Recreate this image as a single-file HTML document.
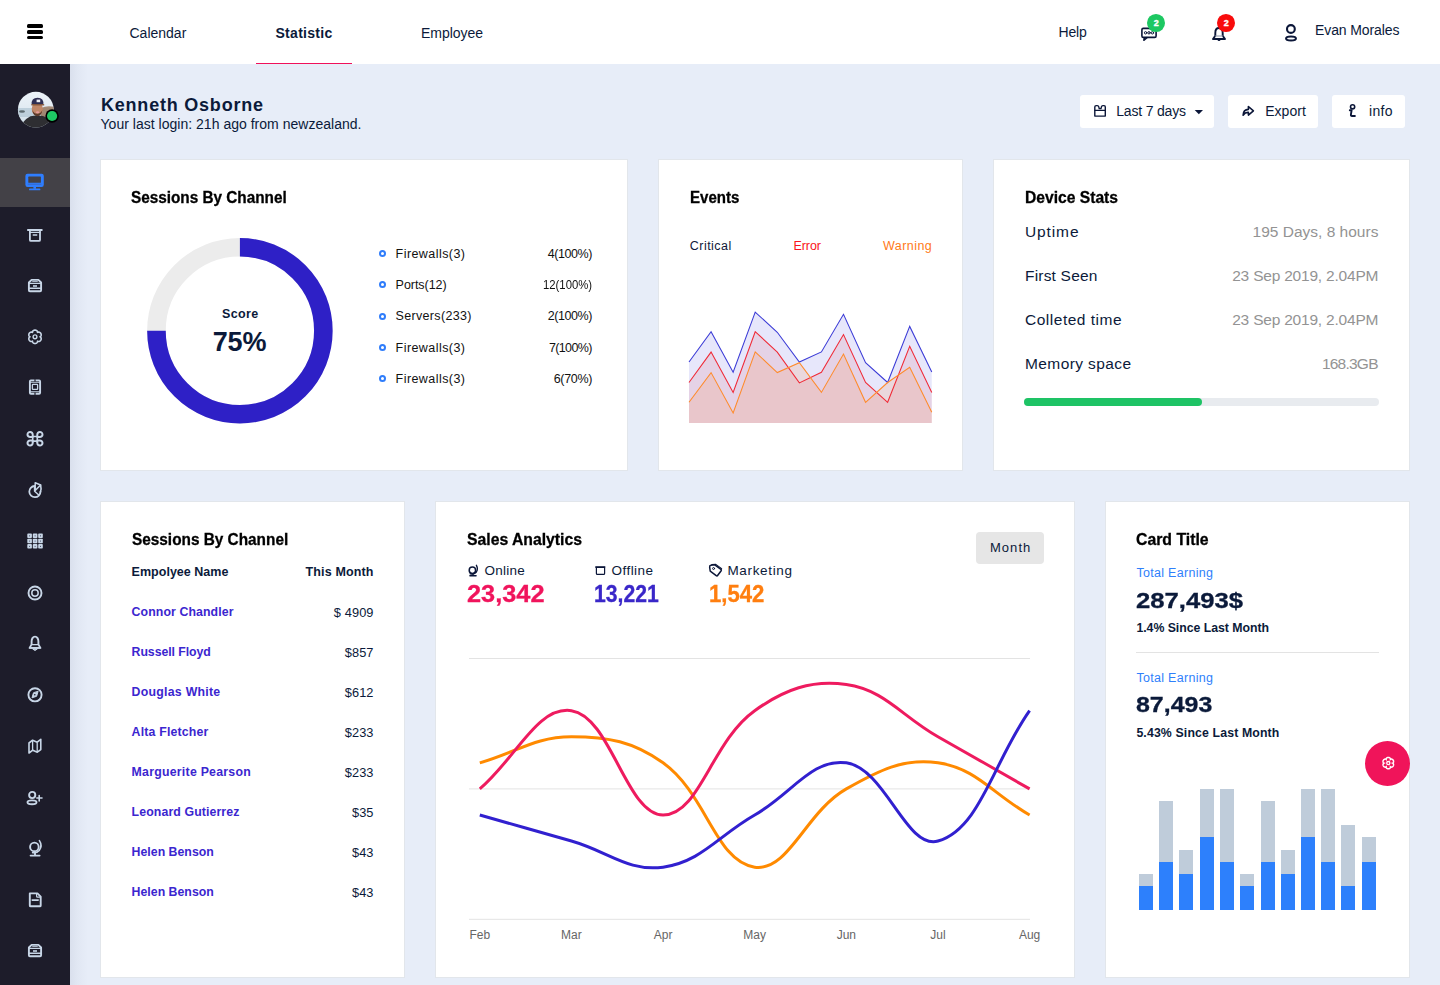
<!DOCTYPE html>
<html><head><meta charset="utf-8"><title>Dashboard</title><style>
*{margin:0;padding:0;box-sizing:border-box}
html,body{width:1440px;height:985px;overflow:hidden;background:#e7edf8;font-family:"Liberation Sans",sans-serif}
.t{position:absolute;white-space:nowrap}
#nav{position:absolute;left:0;top:0;width:1440px;height:64px;background:#fff}
#side{position:absolute;left:0;top:64px;width:70px;height:921px;background:#1d1c2a}
#shadow{position:absolute;left:70px;top:64px;width:18px;height:921px;background:linear-gradient(90deg,rgba(40,50,90,0.07),rgba(40,50,90,0.03) 40%,rgba(40,50,90,0))}
.sideact{position:absolute;left:0;top:158px;width:70px;height:49px;background:#434147}
.hb{position:absolute;left:27.2px;width:15.6px;height:3.9px;border-radius:1.5px;background:#000}
.btn{position:absolute;top:95px;height:33px;background:#fff;border-radius:3px}
.card{position:absolute;background:#fff;border:1px solid #e2e6eb}
.dot{position:absolute;width:7px;height:7px;border:2px solid #2f7dfb;border-radius:50%}
</style></head>
<body>
<div id="nav"></div>
<div id="side"></div>
<div class="sideact"></div>
<div id="shadow"></div>
<svg style="position:absolute;left:25px;top:225px" width="20" height="20" viewBox="0 0 20 20" fill="none" stroke="#c8d6e7" stroke-linecap="round" stroke-linejoin="round"><rect x="2.2" y="4" width="15.3" height="2" fill="#c8d6e7" stroke="none"/><path d="M4.9 6.2V14.9Q4.9 15.9 5.9 15.9H14Q15 15.9 15 14.9V6.2" stroke-width="1.8"/><path d="M4.9 7.3H15" stroke-width="1.2"/><path d="M8.2 10H11.8" stroke-width="1.3"/></svg><svg style="position:absolute;left:25px;top:276px" width="20" height="20" viewBox="0 0 20 20" fill="none" stroke="#c8d6e7" stroke-linecap="round" stroke-linejoin="round"><path d="M6.6 3.9H13.4L16.1 6.5V14.3Q16.1 15.3 15.1 15.3H4.9Q3.9 15.3 3.9 14.3V6.5Z" stroke-width="1.9"/><path d="M4 7.3H16" stroke-width="1.2"/><path d="M4 12.3H16" stroke-width="1.6"/><rect x="8" y="9.2" width="4" height="1.6" fill="#c8d6e7" stroke="none"/><path d="M7.6 5.5H12.4" stroke-width="0.8"/></svg><svg style="position:absolute;left:25px;top:327px" width="20" height="20" viewBox="0 0 20 20" fill="none" stroke="#c8d6e7" stroke-linecap="round" stroke-linejoin="round"><path d="M10.00 3.10 L10.23 3.11 L10.47 3.14 L10.70 3.19 L10.92 3.25 L11.14 3.34 L11.35 3.44 L11.55 3.57 L11.75 3.71 L11.93 3.87 L12.09 4.05 L12.24 4.25 L12.38 4.46 L12.48 4.71 L12.55 5.00 L12.50 5.47 L12.88 5.19 L13.17 5.11 L13.43 5.08 L13.69 5.08 L13.93 5.11 L14.17 5.17 L14.40 5.24 L14.62 5.34 L14.83 5.45 L15.02 5.58 L15.21 5.73 L15.38 5.89 L15.54 6.07 L15.68 6.25 L15.80 6.45 L15.91 6.66 L16.00 6.87 L16.07 7.10 L16.13 7.32 L16.16 7.56 L16.18 7.79 L16.17 8.03 L16.15 8.27 L16.10 8.50 L16.03 8.74 L15.93 8.97 L15.81 9.19 L15.65 9.41 L15.44 9.61 L15.00 9.80 L15.44 9.99 L15.65 10.19 L15.81 10.41 L15.93 10.63 L16.03 10.86 L16.10 11.10 L16.15 11.33 L16.17 11.57 L16.18 11.81 L16.16 12.04 L16.13 12.28 L16.07 12.50 L16.00 12.73 L15.91 12.94 L15.80 13.15 L15.68 13.35 L15.54 13.53 L15.38 13.71 L15.21 13.87 L15.02 14.02 L14.83 14.15 L14.62 14.26 L14.40 14.36 L14.17 14.43 L13.93 14.49 L13.69 14.52 L13.43 14.52 L13.17 14.49 L12.88 14.41 L12.50 14.13 L12.55 14.60 L12.48 14.89 L12.38 15.14 L12.24 15.35 L12.09 15.55 L11.93 15.73 L11.75 15.89 L11.55 16.03 L11.35 16.16 L11.14 16.26 L10.92 16.35 L10.70 16.41 L10.47 16.46 L10.23 16.49 L10.00 16.50 L9.77 16.49 L9.53 16.46 L9.30 16.41 L9.08 16.35 L8.86 16.26 L8.65 16.16 L8.45 16.03 L8.25 15.89 L8.07 15.73 L7.91 15.55 L7.76 15.35 L7.62 15.14 L7.52 14.89 L7.45 14.60 L7.50 14.13 L7.12 14.41 L6.83 14.49 L6.57 14.52 L6.31 14.52 L6.07 14.49 L5.83 14.43 L5.60 14.36 L5.38 14.26 L5.17 14.15 L4.98 14.02 L4.79 13.87 L4.62 13.71 L4.46 13.53 L4.32 13.35 L4.20 13.15 L4.09 12.94 L4.00 12.73 L3.93 12.50 L3.87 12.28 L3.84 12.04 L3.82 11.81 L3.83 11.57 L3.85 11.33 L3.90 11.10 L3.97 10.86 L4.07 10.63 L4.19 10.41 L4.35 10.19 L4.56 9.99 L5.00 9.80 L4.56 9.61 L4.35 9.41 L4.19 9.19 L4.07 8.97 L3.97 8.74 L3.90 8.50 L3.85 8.27 L3.83 8.03 L3.82 7.79 L3.84 7.56 L3.87 7.32 L3.93 7.10 L4.00 6.87 L4.09 6.66 L4.20 6.45 L4.32 6.25 L4.46 6.07 L4.62 5.89 L4.79 5.73 L4.98 5.58 L5.17 5.45 L5.38 5.34 L5.60 5.24 L5.83 5.17 L6.07 5.11 L6.31 5.08 L6.57 5.08 L6.83 5.11 L7.12 5.19 L7.50 5.47 L7.45 5.00 L7.52 4.71 L7.62 4.46 L7.76 4.25 L7.91 4.05 L8.07 3.87 L8.25 3.71 L8.45 3.57 L8.65 3.44 L8.86 3.34 L9.08 3.25 L9.30 3.19 L9.53 3.14 L9.77 3.11 L10.00 3.10Z" stroke-width="1.6"/><circle cx="10" cy="9.8" r="1.9" stroke-width="1.4"/></svg><svg style="position:absolute;left:25px;top:378px" width="20" height="20" viewBox="0 0 20 20" fill="none" stroke="#c8d6e7" stroke-linecap="round" stroke-linejoin="round"><rect x="4.9" y="2.4" width="10.2" height="13.3" rx="1" stroke-width="1.9"/><path d="M5.5 4.3H14.5M5.5 13.8H14.5" stroke-width="1.1"/><rect x="7.4" y="6.4" width="5.2" height="5" rx="0.6" stroke-width="1.3"/><path d="M10 1.6V3.2M10 14.9V16.5" stroke="#1d1c2a" stroke-width="1.2"/></svg><svg style="position:absolute;left:25px;top:429px" width="20" height="20" viewBox="0 0 20 20" fill="none" stroke="#c8d6e7" stroke-linecap="round" stroke-linejoin="round"><path d="M7.7 7.5H12.3V12.1H7.7Z" stroke-width="1.6"/><path d="M7.7 7.5V5.6A2.6 2.6 0 1 0 5.1 8.1H7.7M12.3 7.5V5.6A2.6 2.6 0 1 1 14.9 8.1H12.3M7.7 12.1V13.9A2.6 2.6 0 1 1 5.1 11.4H7.7M12.3 12.1V13.9A2.6 2.6 0 1 0 14.9 11.4H12.3" stroke-width="2"/></svg><svg style="position:absolute;left:25px;top:480px" width="20" height="20" viewBox="0 0 20 20" fill="none" stroke="#c8d6e7" stroke-linecap="round" stroke-linejoin="round"><path d="M9.6 6A5.6 5.6 0 1 0 15.5 11.6" stroke-width="1.8"/><path d="M9.6 6V11.3L13.5 14.8" stroke-width="1.5"/><path d="M10.2 2.7L15.6 5L10.2 10.5Z" stroke-width="1.5"/><path d="M15.6 5Q16.6 9 15.4 12" stroke-width="1.6"/></svg><svg style="position:absolute;left:25px;top:531px" width="20" height="20" viewBox="0 0 20 20" fill="none" stroke="#c8d6e7" stroke-linecap="round" stroke-linejoin="round"><rect x="2.3" y="2.6" width="4.6" height="4.5" rx="0.8" fill="#c8d6e7" stroke="none"/><circle cx="4.6" cy="4.85" r="0.55" fill="#3a3f5a" stroke="none"/><rect x="2.3" y="7.8" width="4.6" height="4.5" rx="0.8" fill="#c8d6e7" stroke="none"/><circle cx="4.6" cy="10.05" r="0.55" fill="#3a3f5a" stroke="none"/><rect x="2.3" y="13.1" width="4.6" height="4.5" rx="0.8" fill="#c8d6e7" stroke="none"/><circle cx="4.6" cy="15.35" r="0.55" fill="#3a3f5a" stroke="none"/><rect x="7.8" y="2.6" width="4.6" height="4.5" rx="0.8" fill="#c8d6e7" stroke="none"/><circle cx="10.1" cy="4.85" r="0.55" fill="#3a3f5a" stroke="none"/><rect x="7.8" y="7.8" width="4.6" height="4.5" rx="0.8" fill="#c8d6e7" stroke="none"/><circle cx="10.1" cy="10.05" r="0.55" fill="#3a3f5a" stroke="none"/><rect x="7.8" y="13.1" width="4.6" height="4.5" rx="0.8" fill="#c8d6e7" stroke="none"/><circle cx="10.1" cy="15.35" r="0.55" fill="#3a3f5a" stroke="none"/><rect x="13.2" y="2.6" width="4.6" height="4.5" rx="0.8" fill="#c8d6e7" stroke="none"/><circle cx="15.5" cy="4.85" r="0.55" fill="#3a3f5a" stroke="none"/><rect x="13.2" y="7.8" width="4.6" height="4.5" rx="0.8" fill="#c8d6e7" stroke="none"/><circle cx="15.5" cy="10.05" r="0.55" fill="#3a3f5a" stroke="none"/><rect x="13.2" y="13.1" width="4.6" height="4.5" rx="0.8" fill="#c8d6e7" stroke="none"/><circle cx="15.5" cy="15.35" r="0.55" fill="#3a3f5a" stroke="none"/></svg><svg style="position:absolute;left:25px;top:582px" width="20" height="20" viewBox="0 0 20 20" fill="none" stroke="#c8d6e7" stroke-linecap="round" stroke-linejoin="round"><circle cx="10" cy="11" r="6.5" stroke-width="1.9"/><circle cx="10" cy="11" r="3.2" stroke-width="1.5"/></svg><svg style="position:absolute;left:25px;top:633px" width="20" height="20" viewBox="0 0 20 20" fill="none" stroke="#c8d6e7" stroke-linecap="round" stroke-linejoin="round"><path d="M10 3.6C7.8 3.6 6.6 6 6.6 8.6V11.4L4.6 14.9H15.4L13.4 11.4V8.6C13.4 6 12.2 3.6 10 3.6Z" stroke-width="1.9"/><path d="M6.8 11.6H13.2" stroke-width="1.2"/><path d="M5 14.9H15" stroke-width="1.6"/><path d="M7.9 16.2Q10 18.8 12.1 16.2Z" fill="#c8d6e7" stroke-width="1"/></svg><svg style="position:absolute;left:25px;top:685px" width="20" height="20" viewBox="0 0 20 20" fill="none" stroke="#c8d6e7" stroke-linecap="round" stroke-linejoin="round"><circle cx="10" cy="9.8" r="6.6" stroke-width="1.9"/><path d="M13 6.6L11.6 11.3L7 12.8L8.4 8.1Z" fill="#c8d6e7" stroke-width="1"/><circle cx="9.8" cy="9.7" r="0.8" fill="#1d1c2a" stroke="none"/></svg><svg style="position:absolute;left:25px;top:736px" width="20" height="20" viewBox="0 0 20 20" fill="none" stroke="#c8d6e7" stroke-linecap="round" stroke-linejoin="round"><path d="M4 7L7.6 4.2L12.2 6.2L15.8 3.3V13.6L12.3 16.2L7.8 14.2L4 17Z" stroke-width="1.6"/><path d="M7.6 5V14M12.2 7V15.5" stroke-width="1.3"/></svg><svg style="position:absolute;left:25px;top:787px" width="20" height="20" viewBox="0 0 20 20" fill="none" stroke="#c8d6e7" stroke-linecap="round" stroke-linejoin="round"><circle cx="7.2" cy="8" r="3.1" stroke-width="1.9"/><ellipse cx="7" cy="15.3" rx="4.5" ry="1.9" stroke-width="1.9"/><path d="M11.8 11H17M14.2 8.5V14" stroke-width="1.6"/></svg><svg style="position:absolute;left:25px;top:838px" width="20" height="20" viewBox="0 0 20 20" fill="none" stroke="#c8d6e7" stroke-linecap="round" stroke-linejoin="round"><circle cx="9.4" cy="8.9" r="4.3" stroke-width="1.9"/><path d="M14.4 2.6Q17.8 7.6 14.2 12.4Q11.8 15.2 7.6 14.6" stroke-width="1.6"/><path d="M10 14.8V17M5.6 17.6H14.6" stroke-width="1.9"/></svg><svg style="position:absolute;left:25px;top:890px" width="20" height="20" viewBox="0 0 20 20" fill="none" stroke="#c8d6e7" stroke-linecap="round" stroke-linejoin="round"><path d="M4.8 3.4H12.4L15.7 6.7V15.4Q15.7 16.3 14.8 16.3H5.7Q4.8 16.3 4.8 15.4Z" stroke-width="1.9"/><path d="M11.6 3.8V6.2Q11.6 7.1 12.5 7.1H15.3" stroke-width="1.2"/><path d="M7.2 10.1H13.2" stroke-width="1.6"/></svg><svg style="position:absolute;left:25px;top:941px" width="20" height="20" viewBox="0 0 20 20" fill="none" stroke="#c8d6e7" stroke-linecap="round" stroke-linejoin="round"><path d="M6.6 3.9H13.4L16.1 6.5V14.3Q16.1 15.3 15.1 15.3H4.9Q3.9 15.3 3.9 14.3V6.5Z" stroke-width="1.9"/><path d="M4 7.3H16" stroke-width="1.2"/><path d="M4 12.3H16" stroke-width="1.6"/><rect x="8" y="9.2" width="4" height="1.6" fill="#c8d6e7" stroke="none"/><path d="M7.6 5.5H12.4" stroke-width="0.8"/></svg><svg style="position:absolute;left:20px;top:165px" width="30" height="30" viewBox="20 165 30 30"><rect x="25.4" y="173.8" width="18.4" height="13.2" rx="2.2" fill="#2f7eff"/><rect x="28.3" y="176.6" width="12.6" height="6.2" rx="0.6" fill="#434147"/><rect x="27.8" y="183.8" width="13.6" height="0.7" fill="#3a5fae"/><rect x="33.4" y="186.8" width="2.6" height="2" fill="#2f7eff"/><rect x="29" y="188.4" width="11.4" height="1.9" rx="0.9" fill="#2f7eff"/></svg>
<svg style="position:absolute;left:1130px;top:8px" width="180" height="40" viewBox="1130 8 180 40" fill="none" stroke="#0b1638" stroke-linejoin="round" stroke-linecap="round"><rect x="1141.9" y="28.4" width="14.2" height="9" rx="1.4" stroke-width="1.6"/><path d="M1144.2 37.6L1143.8 40.4L1147 37.6" stroke-width="1.4"/><circle cx="1145.6" cy="32.8" r="1.2" stroke-width="1"/><circle cx="1149" cy="32.8" r="1.2" stroke-width="1"/><circle cx="1152.4" cy="32.8" r="1.2" stroke-width="1"/><path d="M1219 28C1216.3 28 1215.3 30.5 1215.3 33V35.8L1213 39H1225L1222.7 35.8V33C1222.7 30.5 1221.7 28 1219 28Z" stroke-width="1.9"/><path d="M1215.5 36H1222.5" stroke-width="1" stroke="#8a93a8"/><path d="M1217.2 39.6Q1219 42 1220.8 39.6Z" fill="#0b1638" stroke-width="1"/><circle cx="1290.9" cy="29" r="3.9" stroke-width="2.1"/><ellipse cx="1291" cy="38.5" rx="4.9" ry="2" stroke-width="2.1"/></svg><div style="position:absolute;left:1147.1px;top:14px;width:17.8px;height:17.8px;border-radius:50%;background:#1dc862"></div><div style="position:absolute;left:1217.1px;top:14px;width:17.8px;height:17.8px;border-radius:50%;background:#f80c0c"></div>
<svg style="position:absolute;left:16px;top:90px" width="46" height="40" viewBox="16 90 46 40"><defs><clipPath id="av"><circle cx="35.8" cy="109.7" r="17.9"/></clipPath><linearGradient id="sky" x1="0" y1="0" x2="0" y2="1"><stop offset="0" stop-color="#eef4f9"/><stop offset="0.55" stop-color="#dfe9f1"/><stop offset="1" stop-color="#c9d8e2"/></linearGradient><filter id="bl" x="-20%" y="-20%" width="140%" height="140%"><feGaussianBlur stdDeviation="0.5"/></filter></defs><g clip-path="url(#av)"><rect x="16" y="90" width="40" height="40" fill="url(#sky)"/><g filter="url(#bl)"><rect x="16" y="108" width="40" height="9" fill="#b5c9d6" opacity="0.8"/><ellipse cx="22" cy="111.5" rx="3" ry="1.2" fill="#5d6a70"/><path d="M41 108Q47 105 55 107V122H41Z" fill="#9b7a62" opacity="0.85"/><path d="M20 131Q21 121 30.5 116.2Q37 114.8 43 116Q50 118 55 127V131Z" fill="#2d2d32"/><ellipse cx="37.3" cy="109" rx="5.6" ry="6.8" fill="#c08767"/><path d="M32.4 110Q33 116 37.3 116.2Q41.6 116 42.3 110Q41 113.6 37.3 113.8Q33.6 113.6 32.4 110Z" fill="#5a3a2c"/><path d="M31.6 104.8Q31 98 37.6 97.8Q44 98 43.4 104.8Z" fill="#2f2e52"/><rect x="36.6" y="99.6" width="3.6" height="2.6" fill="#eceef4"/><path d="M31.4 104.8H44.2" stroke="#8a5a3c" stroke-width="1.4"/><ellipse cx="37.6" cy="112.2" rx="1.7" ry="1" fill="#e59a9a"/></g></g><circle cx="52.1" cy="116" r="6.7" fill="#000"/><circle cx="52.1" cy="116" r="5.1" fill="#1ec864"/></svg>
<div class="hb" style="top:24px"></div><div class="hb" style="top:29.7px"></div><div class="hb" style="top:35.5px"></div>
<div class="t" style="top:26px;font-size:14px;line-height:14px;color:#0b1a3a;left:129.50px;">Calendar</div>
<div class="t" style="top:26px;font-size:14px;line-height:14px;font-weight:bold;color:#0b1a3a;letter-spacing:0.286px;left:275.50px;">Statistic</div>
<div class="t" style="top:26px;font-size:14px;line-height:14px;color:#0b1a3a;letter-spacing:-0.037px;left:421.00px;">Employee</div>
<div style="position:absolute;left:256px;top:63px;width:96px;height:1px;background:#f0105a"></div>
<div class="t" style="top:25px;font-size:14px;line-height:14px;color:#0b1a3a;letter-spacing:-0.198px;left:1058.50px;">Help</div>
<div class="t" style="top:23px;font-size:14px;line-height:14px;color:#0b1a3a;letter-spacing:-0.100px;left:1315.00px;">Evan Morales</div>
<div class="t" style="top:96px;font-size:18px;line-height:18px;font-weight:bold;color:#0b1a3a;letter-spacing:0.784px;left:101.00px;">Kenneth Osborne</div>
<div class="t" style="top:117px;font-size:14px;line-height:14px;color:#0b1a3a;letter-spacing:0.020px;left:100.50px;">Your last login: 21h ago from newzealand.</div>
<div class="btn" style="left:1080px;width:134px"></div>
<div class="btn" style="left:1228px;width:90px"></div>
<div class="btn" style="left:1332px;width:73px"></div>
<div class="t" style="top:104px;font-size:14px;line-height:14px;color:#0b1a3a;letter-spacing:-0.180px;left:1116.20px;">Last 7 days</div>
<div class="t" style="top:104px;font-size:14px;line-height:14px;color:#0b1a3a;letter-spacing:0.027px;left:1265.20px;">Export</div>
<div class="t" style="top:104px;font-size:14px;line-height:14px;color:#0b1a3a;letter-spacing:0.342px;left:1369.00px;">info</div>
<div class="card" style="left:100px;top:159px;width:528px;height:312px"></div>
<div class="card" style="left:658px;top:159px;width:305px;height:312px"></div>
<div class="card" style="left:993px;top:159px;width:417px;height:312px"></div>
<div class="card" style="left:100px;top:501px;width:305px;height:477px"></div>
<div class="card" style="left:435px;top:501px;width:640px;height:477px"></div>
<div class="card" style="left:1105px;top:501px;width:305px;height:477px"></div>
<div class="t" style="top:190px;left:131.40px;font-size:16px;line-height:16px;color:#000;transform:scaleX(0.9568);transform-origin:0 0;font-weight:bold;-webkit-text-stroke:0.3px #000;">Sessions By Channel</div>
<svg style="position:absolute;left:140px;top:231px" width="200" height="200" viewBox="140 231 200 200"><circle cx="239.9" cy="330.75" r="83.45" fill="none" stroke="#ececec" stroke-width="18.6"/><path d="M239.9 247.3 A83.45 83.45 0 1 1 156.45 330.75" fill="none" stroke="#2e20c6" stroke-width="18.6"/></svg>
<div class="t" style="top:308px;font-size:12.5px;line-height:12.5px;font-weight:bold;color:#0b1a3a;letter-spacing:0.414px;left:221.90px;">Score</div>
<div class="t" style="top:329px;font-size:27px;line-height:27px;font-weight:bold;color:#0b1a3a;letter-spacing:-0.220px;left:212.80px;">75%</div>
<div class="dot" style="left:378.9px;top:250.10px"></div>
<div class="t" style="top:248px;font-size:12.5px;line-height:12.5px;color:#111;letter-spacing:0.437px;left:395.60px;">Firewalls(3)</div>
<div class="t" style="top:248px;font-size:12.5px;line-height:12.5px;color:#111;letter-spacing:-0.442px;left:547.80px;width:46.16px;text-align:left;">4(100%)</div>
<div class="dot" style="left:378.9px;top:281.30px"></div>
<div class="t" style="top:279px;font-size:12.5px;line-height:12.5px;color:#111;letter-spacing:-0.038px;left:395.60px;">Ports(12)</div>
<div class="t" style="top:279px;left:543.30px;font-size:12.5px;line-height:12.5px;color:#111;transform:scaleX(0.9059);transform-origin:0 0;">12(100%)</div>
<div class="dot" style="left:378.9px;top:312.50px"></div>
<div class="t" style="top:310px;font-size:12.5px;line-height:12.5px;color:#111;letter-spacing:0.323px;left:395.60px;">Servers(233)</div>
<div class="t" style="top:310px;font-size:12.5px;line-height:12.5px;color:#111;letter-spacing:-0.442px;left:547.80px;width:46.16px;text-align:left;">2(100%)</div>
<div class="dot" style="left:378.9px;top:343.70px"></div>
<div class="t" style="top:342px;font-size:12.5px;line-height:12.5px;color:#111;letter-spacing:0.437px;left:395.60px;">Firewalls(3)</div>
<div class="t" style="top:342px;font-size:12.5px;line-height:12.5px;color:#111;letter-spacing:-0.625px;left:548.90px;width:44.88px;text-align:left;">7(100%)</div>
<div class="dot" style="left:378.9px;top:374.90px"></div>
<div class="t" style="top:373px;font-size:12.5px;line-height:12.5px;color:#111;letter-spacing:0.437px;left:395.60px;">Firewalls(3)</div>
<div class="t" style="top:373px;font-size:12.5px;line-height:12.5px;color:#111;letter-spacing:-0.319px;left:553.70px;width:40.38px;text-align:left;">6(70%)</div>
<div class="t" style="top:190px;left:690.30px;font-size:16px;line-height:16px;color:#000;transform:scaleX(0.9396);transform-origin:0 0;font-weight:bold;-webkit-text-stroke:0.3px #000;">Events</div>
<div class="t" style="top:240px;font-size:12.5px;line-height:12.5px;color:#10193a;letter-spacing:0.458px;left:689.80px;">Critical</div>
<div class="t" style="top:240px;font-size:12.5px;line-height:12.5px;color:#fa1420;letter-spacing:-0.045px;left:793.40px;">Error</div>
<div class="t" style="top:240px;font-size:12.5px;line-height:12.5px;color:#ff7a19;letter-spacing:0.453px;left:883.00px;">Warning</div>
<svg style="position:absolute;left:680px;top:300px" width="260" height="130" viewBox="680 300 260 130"><polygon points="689.00,422.9 689.00,362.00 711.07,331.70 733.14,372.30 755.21,312.10 777.28,332.30 799.35,362.00 821.42,351.90 843.49,314.30 865.56,362.70 887.63,382.50 909.70,326.40 931.77,371.90 931.77,422.9" fill="rgba(60,60,220,0.12)"/><polygon points="689.00,422.9 689.00,382.50 711.07,352.10 733.14,392.40 755.21,331.70 777.28,352.10 799.35,382.90 821.42,372.30 843.49,334.60 865.56,382.50 887.63,402.30 909.70,346.20 931.77,392.40 931.77,422.9" fill="rgba(220,30,50,0.10)"/><polygon points="689.00,422.9 689.00,402.30 711.07,372.60 733.14,412.90 755.21,351.90 777.28,372.60 799.35,362.70 821.42,392.40 843.49,354.10 865.56,402.30 887.63,382.50 909.70,367.30 931.77,412.20 931.77,422.9" fill="rgba(255,137,51,0.15)"/><polyline points="689.00,362.00 711.07,331.70 733.14,372.30 755.21,312.10 777.28,332.30 799.35,362.00 821.42,351.90 843.49,314.30 865.56,362.70 887.63,382.50 909.70,326.40 931.77,371.90" fill="none" stroke="#3b3bd6" stroke-width="1.05"/><polyline points="689.00,382.50 711.07,352.10 733.14,392.40 755.21,331.70 777.28,352.10 799.35,382.90 821.42,372.30 843.49,334.60 865.56,382.50 887.63,402.30 909.70,346.20 931.77,392.40" fill="none" stroke="#f02a36" stroke-width="1.05"/><polyline points="689.00,402.30 711.07,372.60 733.14,412.90 755.21,351.90 777.28,372.60 799.35,362.70 821.42,392.40 843.49,354.10 865.56,402.30 887.63,382.50 909.70,367.30 931.77,412.20" fill="none" stroke="#ff8a2a" stroke-width="1.05"/></svg>
<div class="t" style="top:190px;left:1025.40px;font-size:16px;line-height:16px;color:#000;transform:scaleX(0.9772);transform-origin:0 0;font-weight:bold;-webkit-text-stroke:0.3px #000;">Device Stats</div>
<div class="t" style="top:224px;font-size:15.5px;line-height:15.5px;color:#0b1a3a;letter-spacing:0.881px;left:1025.00px;">Uptime</div>
<div class="t" style="top:224px;font-size:15.5px;line-height:15.5px;color:#939393;left:1252.60px;width:127.91px;text-align:left;">195 Days, 8 hours</div>
<div class="t" style="top:268px;font-size:15.5px;line-height:15.5px;color:#0b1a3a;letter-spacing:0.196px;left:1025.00px;">First Seen</div>
<div class="t" style="top:268px;font-size:15.5px;line-height:15.5px;color:#939393;letter-spacing:-0.203px;left:1232.20px;width:148.10px;text-align:left;">23 Sep 2019, 2.04PM</div>
<div class="t" style="top:312px;font-size:15.5px;line-height:15.5px;color:#0b1a3a;letter-spacing:0.512px;left:1025.00px;">Colleted time</div>
<div class="t" style="top:312px;font-size:15.5px;line-height:15.5px;color:#939393;letter-spacing:-0.203px;left:1232.20px;width:148.10px;text-align:left;">23 Sep 2019, 2.04PM</div>
<div class="t" style="top:356px;font-size:15.5px;line-height:15.5px;color:#0b1a3a;letter-spacing:0.396px;left:1025.00px;">Memory space</div>
<div class="t" style="top:356px;font-size:15.5px;line-height:15.5px;color:#939393;letter-spacing:-0.764px;left:1321.90px;width:57.84px;text-align:left;">168.3GB</div>
<div style="position:absolute;left:1024px;top:398px;width:355px;height:8px;border-radius:4px;background:#e8ebef"></div>
<div style="position:absolute;left:1024px;top:398px;width:178px;height:8px;border-radius:4px;background:#1ec365"></div>
<div class="t" style="top:532px;left:131.60px;font-size:16px;line-height:16px;color:#000;transform:scaleX(0.9599);transform-origin:0 0;font-weight:bold;-webkit-text-stroke:0.3px #000;">Sessions By Channel</div>
<div class="t" style="top:566px;font-size:12.5px;line-height:12.5px;font-weight:bold;color:#0b1a3a;letter-spacing:0.019px;left:131.60px;">Empolyee Name</div>
<div class="t" style="top:566px;font-size:12.5px;line-height:12.5px;font-weight:bold;color:#0b1a3a;letter-spacing:0.150px;left:305.50px;width:70.15px;text-align:left;">This Month</div>
<div class="t" style="top:606px;font-size:12.3px;line-height:12.3px;font-weight:bold;color:#3b26cf;letter-spacing:0.104px;left:131.60px;">Connor Chandler</div>
<div class="t" style="top:607px;font-size:12.8px;line-height:12.8px;color:#0b1a3a;letter-spacing:0.100px;left:333.85px;width:41.75px;text-align:left;">$ 4909</div>
<div class="t" style="top:646px;font-size:12.3px;line-height:12.3px;font-weight:bold;color:#3b26cf;letter-spacing:-0.064px;left:131.60px;">Russell Floyd</div>
<div class="t" style="top:647px;font-size:12.8px;line-height:12.8px;color:#0b1a3a;letter-spacing:0.100px;left:344.72px;width:30.88px;text-align:left;">$857</div>
<div class="t" style="top:686px;font-size:12.3px;line-height:12.3px;font-weight:bold;color:#3b26cf;letter-spacing:0.265px;left:131.60px;">Douglas White</div>
<div class="t" style="top:687px;font-size:12.8px;line-height:12.8px;color:#0b1a3a;letter-spacing:0.100px;left:344.72px;width:30.88px;text-align:left;">$612</div>
<div class="t" style="top:726px;font-size:12.3px;line-height:12.3px;font-weight:bold;color:#3b26cf;letter-spacing:0.191px;left:131.60px;">Alta Fletcher</div>
<div class="t" style="top:727px;font-size:12.8px;line-height:12.8px;color:#0b1a3a;letter-spacing:0.100px;left:344.72px;width:30.88px;text-align:left;">$233</div>
<div class="t" style="top:766px;font-size:12.3px;line-height:12.3px;font-weight:bold;color:#3b26cf;letter-spacing:0.251px;left:131.60px;">Marguerite Pearson</div>
<div class="t" style="top:767px;font-size:12.8px;line-height:12.8px;color:#0b1a3a;letter-spacing:0.100px;left:344.72px;width:30.88px;text-align:left;">$233</div>
<div class="t" style="top:806px;font-size:12.3px;line-height:12.3px;font-weight:bold;color:#3b26cf;letter-spacing:0.116px;left:131.60px;">Leonard Gutierrez</div>
<div class="t" style="top:807px;font-size:12.8px;line-height:12.8px;color:#0b1a3a;letter-spacing:0.100px;left:351.94px;width:23.66px;text-align:left;">$35</div>
<div class="t" style="top:846px;font-size:12.3px;line-height:12.3px;font-weight:bold;color:#3b26cf;letter-spacing:0.017px;left:131.60px;">Helen Benson</div>
<div class="t" style="top:847px;font-size:12.8px;line-height:12.8px;color:#0b1a3a;letter-spacing:0.100px;left:351.94px;width:23.66px;text-align:left;">$43</div>
<div class="t" style="top:886px;font-size:12.3px;line-height:12.3px;font-weight:bold;color:#3b26cf;letter-spacing:0.017px;left:131.60px;">Helen Benson</div>
<div class="t" style="top:887px;font-size:12.8px;line-height:12.8px;color:#0b1a3a;letter-spacing:0.100px;left:351.94px;width:23.66px;text-align:left;">$43</div>
<div class="t" style="top:532px;left:466.80px;font-size:16px;line-height:16px;color:#000;transform:scaleX(0.9845);transform-origin:0 0;font-weight:bold;-webkit-text-stroke:0.3px #000;">Sales Analytics</div>
<div style="position:absolute;left:976px;top:532px;width:68px;height:32px;border-radius:4px;background:#e6e6e6"></div>
<div class="t" style="top:541px;font-size:13px;line-height:13px;color:#0b1a3a;letter-spacing:1.067px;left:989.90px;">Month</div>
<div class="t" style="top:564px;font-size:13.5px;line-height:13.5px;color:#0b1a3a;letter-spacing:0.235px;left:484.60px;">Online</div>
<div class="t" style="top:564px;font-size:13.5px;line-height:13.5px;color:#0b1a3a;letter-spacing:0.438px;left:611.60px;">Offline</div>
<div class="t" style="top:564px;font-size:13.5px;line-height:13.5px;color:#0b1a3a;letter-spacing:0.666px;left:727.40px;">Marketing</div>
<div class="t" style="top:583px;left:466.80px;font-size:23px;line-height:23px;color:#f0145c;transform:scaleX(1.1016);transform-origin:0 0;font-weight:bold;-webkit-text-stroke:0.3px #f0145c;">23,342</div>
<div class="t" style="top:583px;left:594.30px;font-size:23px;line-height:23px;color:#3a27c9;transform:scaleX(0.9211);transform-origin:0 0;font-weight:bold;-webkit-text-stroke:0.3px #3a27c9;">13,221</div>
<div class="t" style="top:583px;left:709.00px;font-size:23px;line-height:23px;color:#ff7e0f;transform:scaleX(0.9625);transform-origin:0 0;font-weight:bold;-webkit-text-stroke:0.3px #ff7e0f;">1,542</div>
<svg style="position:absolute;left:460px;top:640px" width="600" height="300" viewBox="460 640 600 300"><line x1="469" x2="1030" y1="658.5" y2="658.5" stroke="#e3e3e3" stroke-width="1"/><line x1="469" x2="1030" y1="788.9" y2="788.9" stroke="#e3e3e3" stroke-width="1"/><line x1="469" x2="1030" y1="919.3" y2="919.3" stroke="#e3e3e3" stroke-width="1"/><path d="M479.80 762.82 C516.45 752.39 534.78 736.74 571.43 736.74 C608.09 736.74 633.24 741.59 663.07 762.82 C706.54 793.75 715.45 861.55 754.70 867.14 C788.76 871.99 805.40 812.20 846.33 788.90 C878.70 770.47 903.17 757.87 937.97 762.82 C976.48 768.30 992.95 794.12 1029.60 814.98" fill="none" stroke="#ff8a00" stroke-width="3"/><path d="M479.80 788.90 C516.45 757.60 537.37 705.81 571.43 710.66 C610.68 716.25 626.41 814.98 663.07 814.98 C699.72 814.98 711.22 741.59 754.70 710.66 C784.53 689.43 811.54 679.63 846.33 684.58 C884.84 690.06 901.31 715.88 937.97 736.74 C974.62 757.60 992.95 768.04 1029.60 788.90" fill="none" stroke="#ee1b5f" stroke-width="3"/><path d="M479.80 814.98 C516.45 825.41 534.78 830.63 571.43 841.06 C608.09 851.49 628.27 872.09 663.07 867.14 C701.58 861.66 718.05 835.84 754.70 814.98 C791.35 794.12 812.12 757.95 846.33 762.82 C885.43 768.38 906.41 850.04 937.97 841.06 C979.71 829.18 992.95 762.82 1029.60 710.66" fill="none" stroke="#3120cf" stroke-width="3"/></svg>
<div class="t" style="top:929px;font-size:12px;line-height:12px;color:#666;left:469.46px;">Feb</div>
<div class="t" style="top:929px;font-size:12px;line-height:12px;color:#666;left:561.10px;">Mar</div>
<div class="t" style="top:929px;font-size:12px;line-height:12px;color:#666;left:653.73px;">Apr</div>
<div class="t" style="top:929px;font-size:12px;line-height:12px;color:#666;left:743.36px;">May</div>
<div class="t" style="top:929px;font-size:12px;line-height:12px;color:#666;left:836.66px;">Jun</div>
<div class="t" style="top:929px;font-size:12px;line-height:12px;color:#666;left:930.30px;">Jul</div>
<div class="t" style="top:929px;font-size:12px;line-height:12px;color:#666;left:1018.92px;">Aug</div>
<div class="t" style="top:532px;left:1136.40px;font-size:16px;line-height:16px;color:#000;transform:scaleX(0.9877);transform-origin:0 0;font-weight:bold;-webkit-text-stroke:0.3px #000;">Card Title</div>
<div class="t" style="top:567px;font-size:12.5px;line-height:12.5px;color:#2f7ffb;letter-spacing:0.303px;left:1136.40px;">Total Earning</div>
<div class="t" style="top:590px;left:1136.40px;font-size:22px;line-height:22px;color:#0b1a3a;transform:scaleX(1.1661);transform-origin:0 0;font-weight:bold;-webkit-text-stroke:0.3px #0b1a3a;">287,493$</div>
<div class="t" style="top:622px;font-size:12.3px;line-height:12.3px;font-weight:bold;color:#0b1a3a;letter-spacing:-0.034px;left:1136.40px;">1.4% Since Last Month</div>
<div style="position:absolute;left:1136px;top:652px;width:243px;height:1px;background:#e3e3e3"></div>
<div class="t" style="top:672px;font-size:12.5px;line-height:12.5px;color:#2f7ffb;letter-spacing:0.303px;left:1136.40px;">Total Earning</div>
<div class="t" style="top:694px;left:1136.40px;font-size:22px;line-height:22px;color:#0b1a3a;transform:scaleX(1.1339);transform-origin:0 0;font-weight:bold;-webkit-text-stroke:0.3px #0b1a3a;">87,493</div>
<div class="t" style="top:727px;font-size:12.3px;line-height:12.3px;font-weight:bold;color:#0b1a3a;letter-spacing:0.137px;left:1136.40px;">5.43% Since Last Month</div>
<div style="position:absolute;left:1139.0px;top:873.7px;width:14px;height:36.3px;background:#bfccda"></div><div style="position:absolute;left:1139.0px;top:885.8px;width:14px;height:24.2px;background:#2d80fc"></div><div style="position:absolute;left:1159.0px;top:801.1px;width:14px;height:108.9px;background:#bfccda"></div><div style="position:absolute;left:1159.0px;top:861.6px;width:14px;height:48.4px;background:#2d80fc"></div><div style="position:absolute;left:1179.0px;top:849.5px;width:14px;height:60.5px;background:#bfccda"></div><div style="position:absolute;left:1179.0px;top:873.7px;width:14px;height:36.3px;background:#2d80fc"></div><div style="position:absolute;left:1200.0px;top:789.0px;width:14px;height:121.0px;background:#bfccda"></div><div style="position:absolute;left:1200.0px;top:837.4px;width:14px;height:72.6px;background:#2d80fc"></div><div style="position:absolute;left:1220.0px;top:789.0px;width:14px;height:121.0px;background:#bfccda"></div><div style="position:absolute;left:1220.0px;top:861.6px;width:14px;height:48.4px;background:#2d80fc"></div><div style="position:absolute;left:1240.0px;top:873.7px;width:14px;height:36.3px;background:#bfccda"></div><div style="position:absolute;left:1240.0px;top:885.8px;width:14px;height:24.2px;background:#2d80fc"></div><div style="position:absolute;left:1260.5px;top:801.1px;width:14px;height:108.9px;background:#bfccda"></div><div style="position:absolute;left:1260.5px;top:861.6px;width:14px;height:48.4px;background:#2d80fc"></div><div style="position:absolute;left:1281.0px;top:849.5px;width:14px;height:60.5px;background:#bfccda"></div><div style="position:absolute;left:1281.0px;top:873.7px;width:14px;height:36.3px;background:#2d80fc"></div><div style="position:absolute;left:1301.0px;top:789.0px;width:14px;height:121.0px;background:#bfccda"></div><div style="position:absolute;left:1301.0px;top:837.4px;width:14px;height:72.6px;background:#2d80fc"></div><div style="position:absolute;left:1321.0px;top:789.0px;width:14px;height:121.0px;background:#bfccda"></div><div style="position:absolute;left:1321.0px;top:861.6px;width:14px;height:48.4px;background:#2d80fc"></div><div style="position:absolute;left:1341.3px;top:825.3px;width:14px;height:84.7px;background:#bfccda"></div><div style="position:absolute;left:1341.3px;top:885.8px;width:14px;height:24.2px;background:#2d80fc"></div><div style="position:absolute;left:1362.0px;top:837.4px;width:14px;height:72.6px;background:#bfccda"></div><div style="position:absolute;left:1362.0px;top:861.6px;width:14px;height:48.4px;background:#2d80fc"></div>
<div style="position:absolute;left:1365px;top:741px;width:45px;height:45px;border-radius:50%;background:#f0145a"></div>
<svg style="position:absolute;left:1378px;top:754px" width="20" height="20" viewBox="1378 754 20 20" fill="none" stroke="#fff"><path d="M1388.30 757.40 L1388.50 757.41 L1388.70 757.43 L1388.89 757.47 L1389.08 757.53 L1389.27 757.60 L1389.45 757.69 L1389.62 757.79 L1389.79 757.91 L1389.94 758.04 L1390.09 758.19 L1390.22 758.36 L1390.33 758.54 L1390.42 758.74 L1390.49 758.98 L1390.45 759.38 L1390.77 759.15 L1391.01 759.08 L1391.23 759.06 L1391.45 759.07 L1391.66 759.10 L1391.86 759.15 L1392.05 759.22 L1392.24 759.30 L1392.41 759.40 L1392.58 759.51 L1392.73 759.64 L1392.88 759.77 L1393.01 759.92 L1393.13 760.08 L1393.24 760.25 L1393.33 760.43 L1393.41 760.61 L1393.47 760.80 L1393.52 760.99 L1393.55 761.19 L1393.56 761.39 L1393.56 761.59 L1393.54 761.79 L1393.50 761.99 L1393.44 762.19 L1393.37 762.39 L1393.26 762.58 L1393.13 762.76 L1392.96 762.94 L1392.60 763.10 L1392.96 763.26 L1393.13 763.44 L1393.26 763.62 L1393.37 763.81 L1393.44 764.01 L1393.50 764.21 L1393.54 764.41 L1393.56 764.61 L1393.56 764.81 L1393.55 765.01 L1393.52 765.21 L1393.47 765.40 L1393.41 765.59 L1393.33 765.77 L1393.24 765.95 L1393.13 766.12 L1393.01 766.28 L1392.88 766.43 L1392.73 766.56 L1392.58 766.69 L1392.41 766.80 L1392.24 766.90 L1392.05 766.98 L1391.86 767.05 L1391.66 767.10 L1391.45 767.13 L1391.23 767.14 L1391.01 767.12 L1390.77 767.05 L1390.45 766.82 L1390.49 767.22 L1390.42 767.46 L1390.33 767.66 L1390.22 767.84 L1390.09 768.01 L1389.94 768.16 L1389.79 768.29 L1389.62 768.41 L1389.45 768.51 L1389.27 768.60 L1389.08 768.67 L1388.89 768.73 L1388.70 768.77 L1388.50 768.79 L1388.30 768.80 L1388.10 768.79 L1387.90 768.77 L1387.71 768.73 L1387.52 768.67 L1387.33 768.60 L1387.15 768.51 L1386.98 768.41 L1386.81 768.29 L1386.66 768.16 L1386.51 768.01 L1386.38 767.84 L1386.27 767.66 L1386.18 767.46 L1386.11 767.22 L1386.15 766.82 L1385.83 767.05 L1385.59 767.12 L1385.37 767.14 L1385.15 767.13 L1384.94 767.10 L1384.74 767.05 L1384.55 766.98 L1384.36 766.90 L1384.19 766.80 L1384.02 766.69 L1383.87 766.56 L1383.72 766.43 L1383.59 766.28 L1383.47 766.12 L1383.36 765.95 L1383.27 765.77 L1383.19 765.59 L1383.13 765.40 L1383.08 765.21 L1383.05 765.01 L1383.04 764.81 L1383.04 764.61 L1383.06 764.41 L1383.10 764.21 L1383.16 764.01 L1383.23 763.81 L1383.34 763.62 L1383.47 763.44 L1383.64 763.26 L1384.00 763.10 L1383.64 762.94 L1383.47 762.76 L1383.34 762.58 L1383.23 762.39 L1383.16 762.19 L1383.10 761.99 L1383.06 761.79 L1383.04 761.59 L1383.04 761.39 L1383.05 761.19 L1383.08 760.99 L1383.13 760.80 L1383.19 760.61 L1383.27 760.43 L1383.36 760.25 L1383.47 760.08 L1383.59 759.92 L1383.72 759.77 L1383.87 759.64 L1384.02 759.51 L1384.19 759.40 L1384.36 759.30 L1384.55 759.22 L1384.74 759.15 L1384.94 759.10 L1385.15 759.07 L1385.37 759.06 L1385.59 759.08 L1385.83 759.15 L1386.15 759.38 L1386.11 758.98 L1386.18 758.74 L1386.27 758.54 L1386.38 758.36 L1386.51 758.19 L1386.66 758.04 L1386.81 757.91 L1386.98 757.79 L1387.15 757.69 L1387.33 757.60 L1387.52 757.53 L1387.71 757.47 L1387.90 757.43 L1388.10 757.41 L1388.30 757.40Z" stroke-width="1.5"/><circle cx="1388.3" cy="763.1" r="1.6" stroke-width="1.3"/></svg>
<svg style="position:absolute;left:1085px;top:98px" width="330" height="26" viewBox="1085 98 330 26" fill="none" stroke="#0b1638" stroke-linejoin="round" stroke-linecap="round"><path d="M1094.8 116.1V107.1Q1094.8 105.6 1096.2 105.6H1097.3Q1098.5 105.6 1098.8 106.9L1099.2 108.6H1101L1101.4 106.9Q1101.7 105.6 1102.9 105.6H1104Q1105.3 105.6 1105.3 107.1V116.1Z" stroke-width="1.4"/><path d="M1095 110.4H1105" stroke-width="1.3"/><path d="M1194.7 110H1203L1198.85 114.3Z" fill="#0b1638" stroke="none"/><path d="M1243.1 115.2Q1243.3 109.6 1248.4 109.4V106.5L1253.4 110.8L1248.4 115.1V112.4Q1245.2 112.2 1243.1 115.2Z" stroke-width="1.6"/><circle cx="1352.6" cy="106.8" r="2.1" stroke-width="1.6"/><path d="M1349.8 110.3H1351.6L1350.9 114.6Q1350.7 116 1352 116H1354.9" stroke-width="1.9"/></svg>
<svg style="position:absolute;left:462px;top:560px" width="270" height="22" viewBox="462 560 270 22" fill="none" stroke="#0b1638" stroke-linejoin="round" stroke-linecap="round"><circle cx="472.4" cy="570.2" r="3.2" stroke-width="1.5"/><path d="M476.4 565.3Q478.4 568.8 476.2 572.2Q474.4 574.3 470.2 573.9" stroke-width="1.4"/><path d="M473 574.2V575.2M469.9 575.8H476.1" stroke-width="1.4"/><rect x="595.3" y="566.2" width="10" height="1.8" fill="#0b1638" stroke="none"/><path d="M596.4 568V573.4Q596.4 574.4 597.4 574.4H603.6Q604.6 574.4 604.6 573.4V568" stroke-width="1.2"/><path d="M711.7 564.8H715.5L721 570.2Q721.6 570.9 721 571.6L716.8 575.8Q716.1 576.5 715.4 575.8L710.1 570.5V566.4Q710.1 564.8 711.7 564.8Z" stroke-width="1.5" transform="rotate(-8 715 570)"/><circle cx="713.6" cy="568.5" r="1" stroke-width="1"/><path d="M712.5 564.2L716.6 564.5L721.8 569.6" stroke-width="1" transform="rotate(-8 715 570)"/></svg>
<div class="t" style="top:19px;font-size:9px;line-height:9px;font-weight:bold;color:#fff;left:1153.70px;-webkit-text-stroke:0.35px #fff;">2</div>
<div class="t" style="top:19px;font-size:9px;line-height:9px;font-weight:bold;color:#fff;left:1223.70px;-webkit-text-stroke:0.35px #fff;">2</div>
</body></html>
